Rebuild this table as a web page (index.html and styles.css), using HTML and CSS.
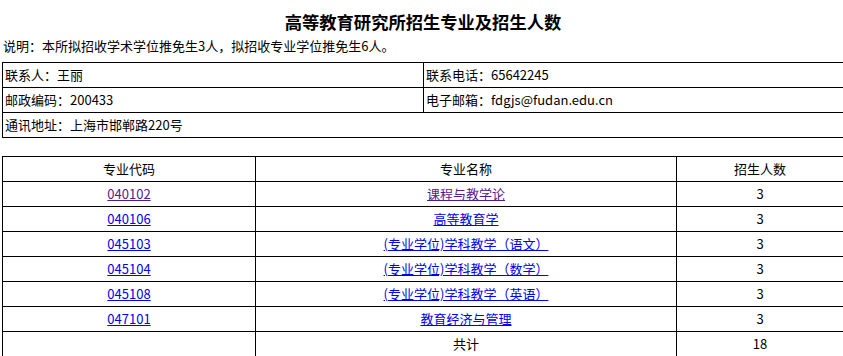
FILE: index.html
```html
<!DOCTYPE html>
<html lang="zh">
<head>
<meta charset="utf-8">
<title>高等教育研究所招生专业及招生人数</title>
<link rel="stylesheet" href="styles.css">
</head>
<body>
<div class="page">
  <div class="title">高等教育研究所招生专业及招生人数</div>
  <div class="note">说明：本所拟招收学术学位推免生3人，拟招收专业学位推免生6人。</div>
  <table class="info">
    <tr><td class="c1">联系人：王丽</td><td>联系电话：65642245</td></tr>
    <tr><td class="c1">邮政编码：200433</td><td>电子邮箱：fdgjs@fudan.edu.cn</td></tr>
    <tr><td colspan="2">通讯地址：上海市邯郸路220号</td></tr>
  </table>
  <table class="list">
    <tr><td class="k1">专业代码</td><td class="k2">专业名称</td><td class="k3">招生人数</td></tr>
    <tr><td><a class="visited" href="#">040102</a></td><td><a class="visited" href="#">课程与教学论</a></td><td>3</td></tr>
    <tr><td><a href="#">040106</a></td><td><a href="#">高等教育学</a></td><td>3</td></tr>
    <tr><td><a href="#">045103</a></td><td><a href="#">(专业学位)学科教学（语文）</a></td><td>3</td></tr>
    <tr><td><a href="#">045104</a></td><td><a href="#">(专业学位)学科教学（数学）</a></td><td>3</td></tr>
    <tr><td><a href="#">045108</a></td><td><a href="#">(专业学位)学科教学（英语）</a></td><td>3</td></tr>
    <tr><td><a href="#">047101</a></td><td><a href="#">教育经济与管理</a></td><td>3</td></tr>
    <tr><td></td><td>共计</td><td>18</td></tr>
  </table>
</div>
</body>
</html>
```
FILE: styles.css
```css
html, body {
  margin: 0;
  padding: 0;
  background: #fff;
  overflow: hidden;
}
body {
  font-family: "Noto Sans CJK SC", "Noto Sans", sans-serif;
  font-size: 13px;
  color: #000;
}
.page {
  width: 842px;
  padding-left: 2px;
}
.title {
  margin-top: 10px;
  height: 24px;
  line-height: 24px;
  text-align: center;
  font-size: 17.3px;
  font-weight: bold;
  color: #000;
}
.note {
  margin-top: 2px;
  height: 20px;
  line-height: 20px;
  padding-left: 1px;
  margin-bottom: 6px;
}
table {
  border-collapse: collapse;
  width: 842px;
  table-layout: fixed;
}
td {
  border: 1px solid #000;
  height: 24px;
  padding: 0;
  line-height: 20px;
  vertical-align: middle;
}
.info td {
  padding-left: 2px;
}
.info td.c1 {
  width: 418px;
}
.list {
  margin-top: 18px;
}
.list td {
  text-align: center;
}
.list td.k1 { width: 252px; }
.list td.k2 { width: 420px; }
a {
  color: #0000ee;
  text-decoration: underline;
}
a.visited {
  color: #551a8b;
}
```
